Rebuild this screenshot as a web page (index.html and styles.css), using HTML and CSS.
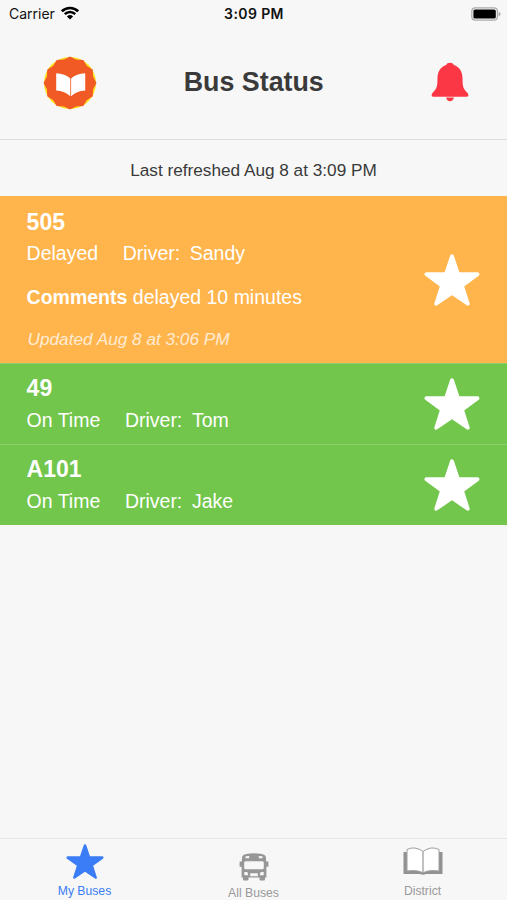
FILE: index.html
```html
<!DOCTYPE html>
<html lang="en">
<head>
<meta charset="utf-8">
<title>Bus Status</title>
<link rel="stylesheet" href="styles.css">
</head>
<body>
<svg class="defs" width="0" height="0" aria-hidden="true">
  <symbol id="star" viewBox="0 0 56 52">
    <path d="M28 2.200 34 20 53.600 20.200 38 31.600 43.800 49.800 28 38.900 12.200 49.800 18 31.600 2.400 20.200 22 20Z" fill="currentColor" stroke="currentColor" stroke-width="3.800" stroke-linejoin="round"/>
  </symbol>
</svg>
<div class="app">
  <div class="statusbar">
    <div class="carrier"><span>Carrier</span>
      <svg class="wifi" viewBox="0 0 18 14"><path d="M.9 5.3a11.5 11.5 0 0 1 16.2 0M3.8 8.1a7.4 7.4 0 0 1 10.4 0" fill="none" stroke="#000" stroke-width="2.6"/><path d="M9 13.5 5.9 10.5a4.5 4.5 0 0 1 6.2 0Z" fill="#000"/></svg>
    </div>
    <div class="clock">3:09 PM</div>
    <svg class="battery" viewBox="0 0 30 14"><rect x=".8" y=".8" width="25.6" height="12.4" rx="3.4" fill="#f7f7f7" stroke="#aaa" stroke-width="1.2"/><rect x="2.4" y="2.4" width="22.4" height="9.2" rx="1.6" fill="#000"/><path d="M27.6 4.8c2.6.8 2.6 3.8 0 4.6Z" fill="#aaa"/></svg>
  </div>
  <header class="header">
    <svg class="logo" viewBox="0 0 54 54">
      <circle cx="27" cy="27" r="26" fill="#ffe01b"/>
      <path d="M27 .5 33 3.4 40.3 3.9 43.7 9.8 49.8 13.7 50 20.5 53.5 27 50 33.5 49.8 40.3 43.7 44.2 40.3 50.1 33 50.6 27 53.5 21 50.6 13.700 50.100 10.300 44.200 4.200 40.300 4 33.500.5 27 4 20.500 4.200 13.700 10.300 9.800 13.700 3.900 21 3.400Z" fill="#f15a24"/>
      <path d="M13.200 17.200Q22 17.500 27.300 22.500V40.300Q22 35 13.200 34.500ZM42.200 17.200Q33.300 17.500 28.100 22.500V40.300Q33.300 35 42.200 34.500Z" fill="#fff"/>
    </svg>
    <h1>Bus Status</h1>
    <svg class="bell" viewBox="0 0 38 40"><path d="M19 .7c2 0 3.3.9 3.8 2.2 5.8 1.9 8.6 6.7 8.7 13.1.2 7.5 0 10.3 4.8 14.7 1.9 1.9 1.1 4-.9 4H2.6c-2 0-2.8-2.1-.9-4C6.500 26.300 6.300 23.500 6.500 16 6.600 9.600 9.400 4.800 15.200 2.900 15.700 1.600 17 .7 19 .7Z" fill="#fc3745"/><path d="M15.200 35.600h7.600c-.2 4.900-7.400 4.900-7.600 0Z" fill="#fc3745"/></svg>
  </header>
  <p class="refreshed">Last refreshed Aug 8 at 3:09 PM</p>
  <main>
    <section class="bus delayed">
      <div class="info">
        <h2>505</h2>
        <p class="state"><span class="status">Delayed</span><span class="label">Driver:</span><span>Sandy</span></p>
        <p class="comment"><b>Comments</b> delayed 10 minutes</p>
        <p class="updated">Updated Aug 8 at 3:06 PM</p>
      </div>
      <svg class="star"><use href="#star"/></svg>
    </section>
    <section class="bus">
      <div class="info">
        <h2>49</h2>
        <p class="state"><span class="status">On Time</span><span class="label">Driver:</span><span>Tom</span></p>
      </div>
      <svg class="star"><use href="#star"/></svg>
    </section>
    <section class="bus">
      <div class="info">
        <h2>A101</h2>
        <p class="state"><span class="status">On Time</span><span class="label">Driver:</span><span>Jake</span></p>
      </div>
      <svg class="star"><use href="#star"/></svg>
    </section>
  </main>
  <nav class="tabs">
    <div class="tab active">
      <svg class="tab-star"><use href="#star"/></svg>
      <span>My Buses</span>
    </div>
    <div class="tab all">
      <svg class="tab-bus" viewBox="0 0 30 28"><path fill="#979797" fill-rule="evenodd" d="M3.200 3.500Q3.800 1.500 7 1 15-.3 23 1 26.200 1.500 26.800 3.500L27.200 8.500H29.400V13.800H27.400V24.500H26V26.500Q26 27.500 25 27.500H21.500Q20.500 27.500 20.500 26.500V24.500H9.500V26.500Q9.500 27.500 8.500 27.500H5Q4 27.500 4 26.500V24.500H2.600V13.800H.6V8.500H2.800ZM6.500 3.300V5.300H10.200V3ZM19.800 3V5.300H23.500V3.300ZM6.200 8.300 5.200 9.300V15.300L6.200 16.300H23.800L24.800 15.300V9.300L23.800 8.300ZM5.300 19V22.300H9.300L8.300 19ZM24.700 19V22.300H20.700L21.700 19ZM11.200 20.300V23.200H18.800V20.300Z"/></svg>
      <span>All Buses</span>
    </div>
    <div class="tab">
      <svg class="tab-book" viewBox="0 0 40 28"><path d="M.5 5H4V23.500H36V5H39.500V27H23Q20 28.500 17 27H.5Z" fill="#929292"/><path d="M20 4.500Q12-1.500 4 2.500V24Q14 22.500 20 25.800 26 22.500 36 24V2.500Q28-1.500 20 4.500Z" fill="#fff" stroke="#a0a0a0" stroke-width="1"/><path d="M20 4.500V25.500" stroke="#a0a0a0" stroke-width="1.300"/></svg>
      <span>District</span>
    </div>
  </nav>
</div>
</body>
</html>
```
FILE: styles.css
```css
* { box-sizing: border-box; }
body {
  margin: 0;
  background: #f7f7f7;
  font-family: "Liberation Sans", Arial, sans-serif;
  color: #3a3a3a;
}
h1, h2, p { margin: 0; font-weight: normal; }
svg { display: block; flex: none; }
.defs { position: absolute; }
.app { height: 900px; display: flex; flex-direction: column; overflow: hidden; }
.statusbar {
  height: 27px;
  padding: 0 6px 0 9px;
  display: grid;
  grid-template-columns: 1fr auto 1fr;
  align-items: center;
  font: 14px/27px Inter, sans-serif;
  color: #111;
}
.carrier { display: flex; align-items: center; gap: 6px; }
.wifi { width: 18px; height: 14px; margin-top: -2px; }
.clock { font-weight: 600; letter-spacing: .4px; margin-right: 2px; }
.battery { width: 30px; height: 14px; justify-self: end; }
.header {
  height: 113px;
  padding: 0 38px 0 43px;
  border-bottom: 1px solid #dcdcdc;
  display: grid;
  grid-template-columns: 54px 1fr 38px;
  align-items: center;
}
.logo { width: 54px; height: 54px; }
.header h1 { font-size: 26.8px; line-height: 32px; font-weight: bold; margin: 0 20.5px 3px 0; text-align: center; }
.bell { width: 38px; height: 40px; margin-bottom: 2px; }
.refreshed { height: 56px; line-height: 60px; font-size: 17.2px; text-align: center; }
.bus {
  height: 81px;
  padding: 11px 27px 0 26.6px;
  background: #72c64c;
  border-top: 1px solid #8fce70;
  color: #fff;
  display: flex;
  justify-content: space-between;
}
.bus.delayed { height: 167px; padding-top: 12px; background: #ffb44c; border-top-color: #ffb44c; }
.bus h2 { font-size: 23px; line-height: 26px; font-weight: bold; }
.state { display: flex; font-size: 19.5px; line-height: 24px; margin-top: 7px; }
.delayed .state { margin-top: 6px; }
.status { margin-right: 24.6px; }
.label { margin-right: 9.6px; }
.comment { font-size: 19.5px; line-height: 24px; margin-top: 20px; }
.updated { font-size: 17.2px; line-height: 20px; font-style: italic; margin: 20px 0 0 1px; opacity: .75; }
.star { width: 56px; height: 52px; margin-top: 2.5px; }
.delayed .star { margin-top: 44.5px; }
.tabs {
  height: 62px;
  margin-top: auto;
  border-top: 1px solid #e6e6e6;
  display: grid;
  grid-template-columns: repeat(3, 1fr);
  font-size: 12.2px;
  line-height: 14px;
  color: #999;
}
.tab { display: flex; flex-direction: column; align-items: center; justify-content: space-between; padding: 5px 0 2px; }
.active { color: #3b7df6; }
.tab.all { padding: 14px 0 0; }
.tab-star { width: 38px; height: 35px; }
.tab-bus { width: 30px; height: 28px; }
.tab-book { width: 40px; height: 28px; margin-top: 3px; }
```
